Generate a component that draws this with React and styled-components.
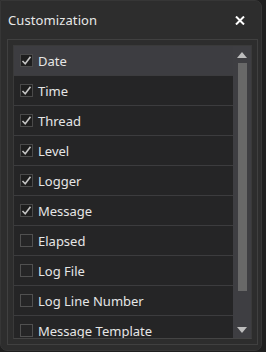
import React from "react";
import styled, { createGlobalStyle } from "styled-components";

const items = [
  { label: "Date", checked: true, active: true },
  { label: "Time", checked: true },
  { label: "Thread", checked: true },
  { label: "Level", checked: true },
  { label: "Logger", checked: true },
  { label: "Message", checked: true },
  { label: "Elapsed", checked: false },
  { label: "Log File", checked: false },
  { label: "Log Line Number", checked: false },
  { label: "Message Template", checked: false },
];

const App = () => {
  return (
    <>
      <GlobalStyle />
      <Window>
        <Header>
          <Title>Customization</Title>
          <CloseButton aria-label="Close">
            <svg width="10" height="9" viewBox="0 0 10 9">
              <path d="M1 0.5 L9 8.5 M9 0.5 L1 8.5" stroke="#fff" strokeWidth="2" />
            </svg>
          </CloseButton>
        </Header>
        <Panel>
          <ListBox>
            <List>
              {items.map((item) => (
                <Row key={item.label} $active={item.active}>
                  <Box $checked={item.checked}>
                    {item.checked && (
                      <svg width="11" height="11" viewBox="0 0 11 11">
                        <path d="M1.5 6 L4.2 8.8 L9.5 1.8" fill="none" stroke="#c4c4c4" strokeWidth="1.6" />
                      </svg>
                    )}
                  </Box>
                  <Label>{item.label}</Label>
                </Row>
              ))}
            </List>
            <ScrollBar>
              <Arrow>
                <svg width="10" height="6" viewBox="0 0 10 6">
                  <path d="M5 0 L10 6 L0 6 Z" fill="#bdbdbd" />
                </svg>
              </Arrow>
              <Track>
                <Thumb />
              </Track>
              <Arrow>
                <svg width="10" height="6" viewBox="0 0 10 6">
                  <path d="M0 0 L10 0 L5 6 Z" fill="#bdbdbd" />
                </svg>
              </Arrow>
            </ScrollBar>
          </ListBox>
        </Panel>
      </Window>
    </>
  );
};

export default App;

const GlobalStyle = createGlobalStyle`
  html, body {
    margin: 0;
    padding: 0;
    background: #1f1f1f;
    overflow: hidden;
  }
`;

const Window = styled.div`
  width: 262px;
  height: 351px;
  box-sizing: border-box;
  background: #2d2d2d;
  border: 1px solid #363636;
  border-radius: 0 7px 7px 7px;
  display: flex;
  flex-direction: column;
  font-family: "Noto Sans", "Open Sans", sans-serif;
`;

const Header = styled.div`
  height: 37px;
  flex-shrink: 0;
  display: flex;
  align-items: center;
  justify-content: space-between;
  padding: 0 16px 0 7px;
`;

const Title = styled.div`
  color: #e8e8e8;
  font-size: 13px;
  letter-spacing: 0.1px;
  margin-top: 1px;
`;

const CloseButton = styled.div`
  display: flex;
  margin-top: 1px;
`;

const Panel = styled.div`
  margin: 1px 3px 5px 6px;
  flex: 1;
  min-height: 0;
  border: 1px solid #404040;
  padding: 5px;
  display: flex;
`;

const ListBox = styled.div`
  flex: 1;
  border: 1px solid #3a3a3a;
  border-bottom-color: #444;
  display: flex;
  overflow: hidden;
`;

const List = styled.div`
  flex: 1;
  background: #252526;
  overflow: hidden;
`;

const Row = styled.div`
  height: 29px;
  border-bottom: 1px solid #3c3c3e;
  background: ${(p) => (p.$active ? "#3d3d41" : "#252526")};
  display: flex;
  align-items: center;
  padding-left: 6px;
  gap: 5px;
`;

const Box = styled.div`
  width: 11px;
  height: 11px;
  border: 1px solid ${(p) => (p.$checked ? "#4a4a4a" : "#505050")};
  background: ${(p) => (p.$checked ? "#1e1e1e" : "#252526")};
  display: flex;
  align-items: center;
  justify-content: center;
`;

const Label = styled.span`
  color: #e6e6e6;
  font-size: 13px;
  white-space: nowrap;
`;

const ScrollBar = styled.div`
  width: 18px;
  background: #3e3e42;
  display: flex;
  flex-direction: column;
  align-items: center;
`;

const Arrow = styled.div`
  height: 17px;
  flex-shrink: 0;
  display: flex;
  align-items: center;
  justify-content: center;
`;

const Track = styled.div`
  flex: 1;
  width: 100%;
  display: flex;
  justify-content: center;
`;

const Thumb = styled.div`
  width: 9px;
  height: 228px;
  background: #686868;
`;
